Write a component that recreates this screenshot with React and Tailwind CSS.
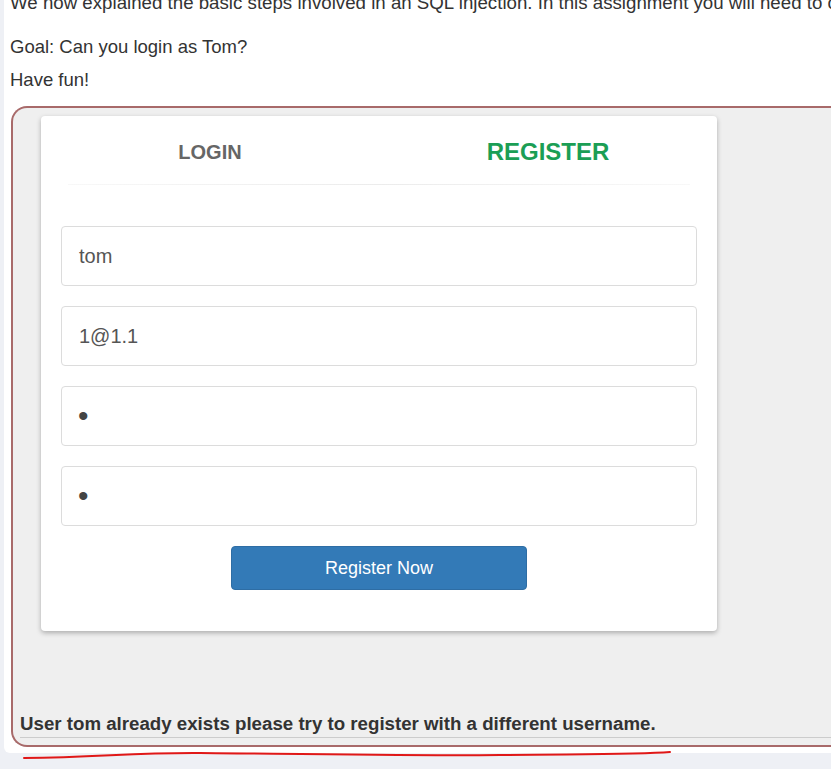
export default function App() {
  return (
    <div
      className="relative min-h-screen bg-[#eef0f5] pl-[4px] text-[#333]"
      style={{ fontFamily: '"Liberation Sans", Arial, sans-serif' }}
    >
      <div className="overflow-hidden rounded-bl-[6px] bg-white pb-[6px] pl-[6px]">
        <p className="mt-[-8px] whitespace-nowrap text-[18.7px] leading-[22px]">
          We now explained the basic steps involved in an SQL injection. In this assignment you will need to combine all the things we explained in the SQL lessons.
        </p>
        <p className="mt-[22px] text-[18.5px] leading-[22px]">Goal: Can you login as Tom?</p>
        <p className="mt-[11px] text-[18.5px] leading-[22px]">Have fun!</p>

        <div className="ml-[1px] mt-[15px] rounded-l-[16px] border-2 border-r-0 border-[#a86a6a] bg-[#efefef] pt-[8px]">
          <div className="ml-[28px] w-[676px] rounded-[4px] bg-white shadow-[0_2px_5px_rgba(0,0,0,0.28)]">
            <div className="grid h-[68px] grid-cols-2 items-center pt-[4px]">
              <div className="text-center text-[20px] font-bold text-[#666]">LOGIN</div>
              <div className="text-center text-[24px] font-bold text-[#1b9e55]">REGISTER</div>
            </div>
            <div className="mx-[27px] h-px bg-gradient-to-r from-[#f8f8f8] via-[#ececec] to-[#f8f8f8]" />
            <div className="flex flex-col gap-[20px] px-[20px] pb-[41px] pt-[41px]">
              <div className="flex h-[60px] items-center rounded-[4px] border border-[#dcdcdc] pl-[17px] text-[20px] text-[#555]">
                tom
              </div>
              <div className="flex h-[60px] items-center rounded-[4px] border border-[#dcdcdc] pl-[17px] text-[20px] text-[#555]">
                1@1.1
              </div>
              <div className="flex h-[60px] items-center rounded-[4px] border border-[#dcdcdc] pl-[16px] text-[30px] leading-none text-[#444]">
                •
              </div>
              <div className="flex h-[60px] items-center rounded-[4px] border border-[#dcdcdc] pl-[16px] text-[30px] leading-none text-[#444]">
                •
              </div>
              <button className="flex h-[44px] w-[296px] items-center justify-center self-center rounded-[4px] border border-[#2e6da4] bg-[#337ab7] text-[18px] text-white">
                Register Now
              </button>
            </div>
          </div>

          <div className="mb-[7px] ml-[7px] mt-[82px] border-b border-[#cccccc] pb-[2px] text-[18.7px] font-bold leading-[22px] text-[#333]">
            User tom already exists please try to register with a different username.
          </div>
        </div>
      </div>

      <svg
        className="absolute left-0 top-[745px]"
        width="700"
        height="20"
        viewBox="0 0 700 20"
        fill="none"
      >
        <path
          d="M24 13 C 100 12.5, 130 7.5, 200 8 S 400 11, 500 10 S 640 9.5, 670 7"
          stroke="#e01818"
          strokeWidth="2"
          strokeLinecap="round"
        />
      </svg>
    </div>
  );
}
